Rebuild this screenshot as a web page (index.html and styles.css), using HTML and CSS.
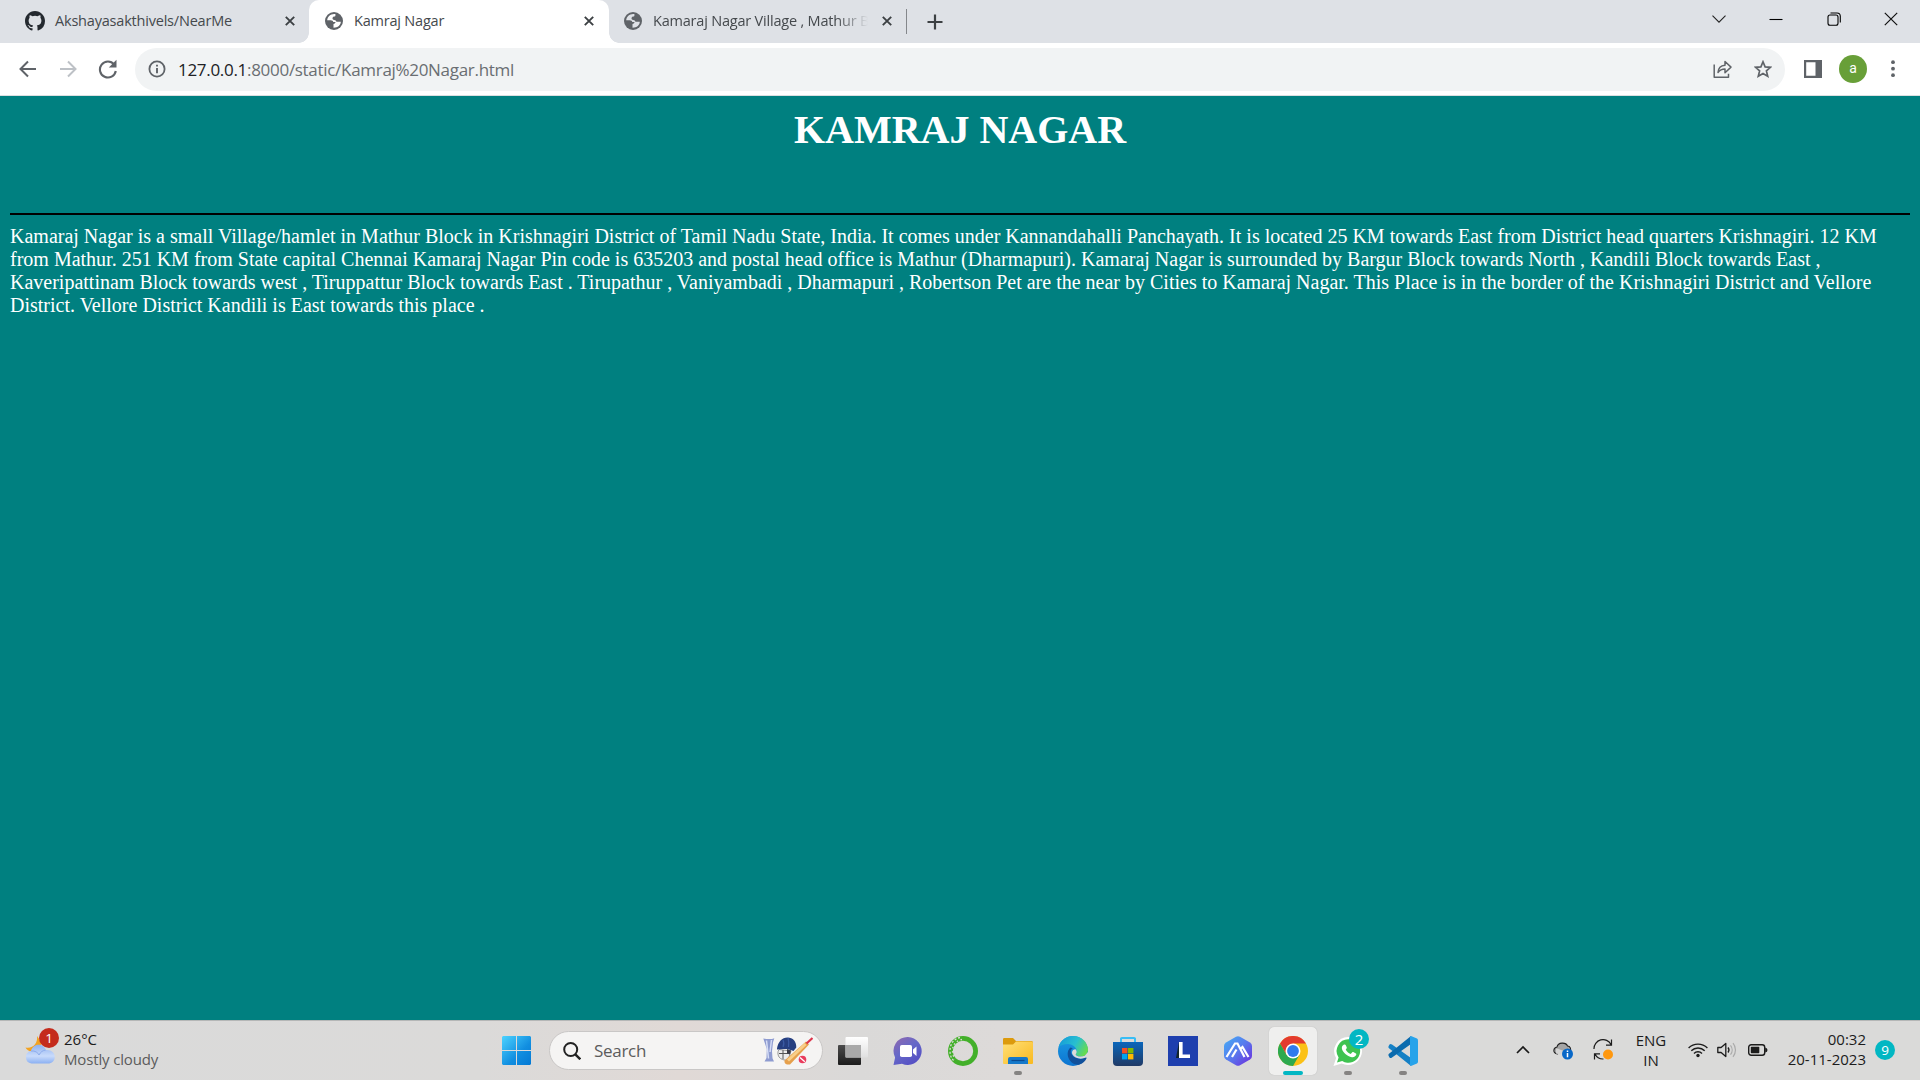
FILE: index.html
```html
<!DOCTYPE html>
<html lang="en">
<head>
<meta charset="utf-8">
<title>Kamraj Nagar</title>
<link rel="stylesheet" href="styles.css">
</head>
<body>
<svg width="0" height="0" class="defs">
  <defs>
    <symbol id="globe" viewBox="0 0 18 18"><circle cx="9" cy="9" r="9" fill="#5f6368"/><path d="M10.500 2.200C6 1.500 2.500 4.500 2.200 8.200h3.500c1.500 0 2.500.8 2.500 1.800h2.300c0 1.200-.8 1.700-2 1.900v3.900C13 15.700 15.800 13 15.800 9.800h-3.300c-1 0-1.500-.7-2-1.600-2.500 0-3-.9-3-1.900 0-1.200 1-1.700 2-1.700.8 0 1-.9 1-2.400z" fill="var(--tab-bg)"/></symbol>
    <symbol id="cross" viewBox="0 0 10 10"><path d="M.8.800l8.400 8.400M9.200.800L.8 9.200" stroke="#3c4043" stroke-width="1.900" fill="none"/></symbol>
  </defs>
</svg>

<header class="tabs">
  <div class="tab tab-first">
    <svg class="fav" viewBox="0 0 16 16"><path fill="#24292f" d="M8 0C3.580 0 0 3.580 0 8c0 3.540 2.290 6.530 5.470 7.590.4.070.55-.17.55-.38v-1.490c-2.230.48-2.700-.94-2.700-.94-.36-.92-.89-1.170-.89-1.170-.73-.5.060-.49.060-.49.800.060 1.230.83 1.230.83.710 1.230 1.870.87 2.330.66.070-.52.280-.87.500-1.070-1.780-.2-3.640-.89-3.640-3.950 0-.87.310-1.590.82-2.150-.08-.2-.36-1.020.08-2.120 0 0 .67-.21 2.200.82a7.600 7.600 0 0 1 4 0c1.530-1.040 2.200-.82 2.200-.82.440 1.100.16 1.920.08 2.120.51.560.82 1.270.82 2.150 0 3.070-1.870 3.750-3.650 3.950.29.250.54.730.54 1.480v2.200c0 .21.150.46.550.38A8 8 0 0 0 16 8c0-4.420-3.580-8-8-8z"/></svg>
    <span class="title">Akshayasakthivels/NearMe</span>
    <svg class="x"><use href="#cross"/></svg>
  </div>
  <div class="tab active">
    <svg class="fav"><use href="#globe"/></svg>
    <span class="title">Kamraj Nagar</span>
    <svg class="x"><use href="#cross"/></svg>
  </div>
  <div class="tab tab-last">
    <svg class="fav"><use href="#globe"/></svg>
    <span class="title t3">Kamaraj Nagar Village , Mathur B</span>
    <svg class="x"><use href="#cross"/></svg>
  </div>
  <i class="sep"></i>
  <svg class="plus" viewBox="0 0 16 16"><path d="M8 .500v15M.5 8h15" stroke="#3c4043" stroke-width="2.200"/></svg>
  <div class="win">
    <svg viewBox="0 0 14 14"><path d="M.5 3.700L7 10.200l6.500-6.500" fill="none" stroke="#222" stroke-width="1.100"/></svg>
    <svg viewBox="0 0 14 14"><path d="M.5 7.500h13" stroke="#000" stroke-width="1.100"/></svg>
    <svg viewBox="0 0 14 14"><rect x="1" y="3" width="10" height="10.300" rx="2" fill="none" stroke="#000" stroke-width="1.100"/><path d="M3.500 1h6.500a3.300 3.300 0 0 1 3.300 3.300V10.500" fill="none" stroke="#000" stroke-width="1.100"/></svg>
    <svg viewBox="0 0 14 14"><path d="M.8.800l12.400 12.400M13.200.800L.8 13.200" stroke="#111" stroke-width="1.200"/></svg>
  </div>
</header>

<nav class="toolbar">
  <svg class="nav-i" viewBox="0 0 20 20"><path d="M18 10H3M10 2.500L2.500 10l7.500 7.500" fill="none" stroke="#5f6368" stroke-width="2"/></svg>
  <svg class="nav-i" viewBox="0 0 20 20"><path d="M2 10h15M10 2.500l7.500 7.500-7.500 7.500" fill="none" stroke="#bdc1c6" stroke-width="2"/></svg>
  <svg class="nav-i" viewBox="0 0 20 20"><path d="M16.200 5.500A8 8 0 1 0 17.800 12" fill="none" stroke="#5f6368" stroke-width="2.100"/><path d="M18.500.800v7.700h-7.700z" fill="#5f6368"/></svg>
  <div class="omnibox">
    <svg class="info" viewBox="0 0 18 18"><circle cx="9" cy="9" r="7.600" fill="none" stroke="#5f6368" stroke-width="1.800"/><path d="M9 8v5.200M9 4.700v1.900" stroke="#5f6368" stroke-width="1.900"/></svg>
    <span class="url"><b>127.0.0.1</b>:8000/static/Kamraj%20Nagar.html</span>
    <svg class="share" viewBox="0 0 20 20"><path d="M1.200 5.500v12.800h14.300v-3.500M5 13.500c.3-4.300 2.500-7 7-7.300V2.500l6 5.600-6 5.600V10c-3.200 0-5.200 1-7 3.500z" fill="none" stroke="#5f6368" stroke-width="1.500" stroke-linejoin="round"/></svg>
    <svg class="star" viewBox="0 0 18 18"><path d="M9 1.800l2.100 5.100 5.400.4-4.100 3.600 1.300 5.300L9 13.400l-4.700 2.800 1.300-5.300L1.500 7.300l5.400-.4z" fill="none" stroke="#5f6368" stroke-width="1.700"/></svg>
  </div>
  <svg class="panel" viewBox="0 0 18 18"><path fill="#5f6368" fill-rule="evenodd" d="M0 0h18v18H0zM2.200 2.200v13.600h9.300V2.200z"/></svg>
  <span class="avatar">a</span>
  <svg class="dots" viewBox="0 0 4 18"><g fill="#5f6368"><circle cx="2" cy="2.200" r="1.900"/><circle cx="2" cy="8.700" r="1.900"/><circle cx="2" cy="15.200" r="1.900"/></g></svg>
</nav>

<main class="page">
  <h1>KAMRAJ NAGAR</h1>
  <hr>
  <p>Kamaraj Nagar is a small Village/hamlet in Mathur Block in Krishnagiri District of Tamil Nadu State, India. It comes under Kannandahalli Panchayath. It is located 25 KM towards East from District head quarters Krishnagiri. 12 KM from Mathur. 251 KM from State capital Chennai Kamaraj Nagar Pin code is 635203 and postal head office is Mathur (Dharmapuri). Kamaraj Nagar is surrounded by Bargur Block towards North , Kandili Block towards East , Kaveripattinam Block towards west , Tiruppattur Block towards East . Tirupathur , Vaniyambadi , Dharmapuri , Robertson Pet are the near by Cities to Kamaraj Nagar. This Place is in the border of the Krishnagiri District and Vellore District. Vellore District Kandili is East towards this place .</p>
</main>

<footer class="taskbar">
  <div class="weather">
    <div class="w-icon">
      <svg viewBox="0 0 30 30">
        <defs><linearGradient id="cl" x1="0" y1="0" x2="0" y2="1"><stop offset="0" stop-color="#8fb1f0"/><stop offset=".6" stop-color="#c9dbfb"/><stop offset="1" stop-color="#8bb0f2"/></linearGradient></defs>
        <path d="M12 1c1 7-4 13-11.500 11.500C2 16 7 18 12 15l5-7z" fill="#f3a220"/>
        <path d="M6.500 28.500a6.300 6.300 0 0 1-.6-12.400C7 12.500 9.800 9.800 13.500 9.800c3.600 0 6.300 2.200 7.200 5.200 5-.8 9.100 2.600 9.100 6.900 0 3.800-3 6.600-6.800 6.600z" fill="url(#cl)"/>
        <path d="M6 16c4-.5 7 1.500 8 4 1.500-3 3.700-4.600 6.700-5" fill="none" stroke="#8dacec" stroke-width="1"/>
      </svg>
      <span class="badge red">1</span>
    </div>
    <div class="w-text"><span class="temp">26°C</span><span class="cond">Mostly cloudy</span></div>
  </div>

  <div class="start">
    <svg viewBox="0 0 29 29"><defs><linearGradient id="ws" gradientUnits="userSpaceOnUse" x1="0" y1="0" x2="29" y2="29"><stop offset="0" stop-color="#4cd3ff"/><stop offset=".6" stop-color="#118ee0"/><stop offset="1" stop-color="#0478d4"/></linearGradient></defs><path fill="url(#ws)" d="M1 0h13v14H0V1zM15 0h13l1 1v13H15zM0 15h14v14H1l-1-1zM15 15h14v13l-1 1H15z"/></svg>
  </div>

  <div class="search">
    <svg class="lens" viewBox="0 0 18 18"><circle cx="7.700" cy="7.500" r="6.500" fill="none" stroke="#222" stroke-width="2"/><path d="M12.300 12.300l5 5" stroke="#222" stroke-width="2.400"/></svg>
    <span>Search</span>
    <svg class="cricket" viewBox="0 0 50 28">
      <path d="M.3 1.500l3 .4H9l2.300-.6-1.300 4-1 9 .5 7 1.500 3.200H1.500L3.500 21 3.800 12z" fill="#8e9bd0"/><path d="M3.500 3.500l2 18M8.500 3l-1.500 12" stroke="#d5dcf5" stroke-width="1.500"/>
      <path d="M16 12.500c-1.500 2-1.500 5 0 7.500 2 2.500 5 3.500 9 3l3-9z" fill="#ececec" stroke="#999" stroke-width="1"/><path d="M16 16.500h9M20 13v9" stroke="#555" stroke-width="1"/><path d="M24 12l4 1.500-1 4-3-1z" fill="#3a3a44"/>
      <path d="M14 11.500C15 5 19 .500 24.500.5c5.500 0 9 4 8.800 10l-2.800 3.500C26 11.500 20 11.500 14 12.500z" fill="#263f80"/><path d="M20 3c1 2 1 5 0 7M25 1c1 3 1 6 .5 9" stroke="#3b5ba3" stroke-width="1.200" fill="none"/>
      <path d="M43 4.500l3 3L27 27.500c-3 .5-6-.5-5.500-4z" fill="#e6a04c"/><path d="M42.500 7L25 23.500" stroke="#f8cf89" stroke-width="3"/><path d="M43.500 6.500l6-5.500" stroke="#dc354c" stroke-width="2.200"/>
      <circle cx="39.500" cy="22.500" r="3.800" fill="#e93b5c"/><path d="M37 20.500l4.800 4.300" stroke="#fff" stroke-width="1.300"/>
    </svg>
  </div>

  <div class="apps">
    <div class="app"><svg viewBox="0 0 30 30"><defs><linearGradient id="dk" x1="0" y1="0" x2="0" y2="1"><stop offset="0" stop-color="#4b4b4b"/><stop offset="1" stop-color="#1c1c1c"/></linearGradient><linearGradient id="lt" x1="0" y1="0" x2="0" y2="1"><stop offset="0" stop-color="#fff"/><stop offset="1" stop-color="#e0e0e0"/></linearGradient></defs><rect y="9" width="23" height="20" rx="1" fill="url(#dk)"/><rect x="7.500" y="1" width="22.500" height="20.500" rx="1" fill="url(#lt)"/><rect x="7.500" y="9" width="15.500" height="12.500" fill="#a9a9a9"/></svg></div>
    <div class="app"><svg viewBox="0 0 30 30"><defs><linearGradient id="tm" x1="0" y1="0" x2=".7" y2="1"><stop offset="0" stop-color="#9269ad"/><stop offset=".5" stop-color="#6668c8"/><stop offset="1" stop-color="#554fc4"/></linearGradient></defs><path d="M15 1a14 14 0 1 1-6 26.800L.5 29l1.600-7.500A14 14 0 0 1 15 1z" fill="url(#tm)"/><rect x="7" y="9" width="12" height="12" rx="1.800" fill="#fff"/><path d="M20 13.500l3.500-3v9.500L20 17z" fill="#fff"/></svg></div>
    <div class="app"><svg viewBox="0 0 30 30"><circle cx="15" cy="15" r="12.600" fill="none" stroke="#43b02a" stroke-width="4.800"/><path d="M12 1.500C5.500 3 2 8 2 15c0 4 1.300 7.500 4 10" fill="none" stroke="#dbd9d8" stroke-width="1.300" stroke-dasharray="2 1.800"/><path d="M14 3.500C7.500 5 4.500 9 4.500 15c0 3 1 6 2.500 8" fill="none" stroke="#dbd9d8" stroke-width="1.300" stroke-dasharray="1.500 2.600"/></svg></div>
    <div class="app run"><svg viewBox="0 0 30 30"><defs><linearGradient id="fo" x1="0" y1="0" x2="1" y2="1"><stop offset="0" stop-color="#ffe078"/><stop offset="1" stop-color="#f9b91f"/></linearGradient></defs><path d="M0 3.200Q0 2 1.200 2H10l3 3h15.500Q30 5 30 6.500V14H0z" fill="#dc9a0c"/><path d="M0 8.500h10l3-3h15.500Q30 5.500 30 7v20q0 1-1 1H1q-1 0-1-1z" fill="url(#fo)"/><path d="M5 28v-5q0-2 2-2h16q2 0 2 2v5z" fill="#1679ca"/><path d="M8.500 24.500h13" stroke="#0b4b91" stroke-width="1.200"/></svg></div>
    <div class="app"><svg viewBox="0 0 30 30"><defs><linearGradient id="eg" x1="0" y1=".2" x2="1" y2=".6"><stop offset="0" stop-color="#159bd9"/><stop offset=".55" stop-color="#28bfd0"/><stop offset="1" stop-color="#67dc4c"/></linearGradient><linearGradient id="eb" x1="0" y1="0" x2="0" y2="1"><stop offset="0" stop-color="#1c9de3"/><stop offset="1" stop-color="#0d74d1"/></linearGradient></defs><circle cx="15" cy="15" r="15" fill="url(#eb)"/><path d="M.6 11C2.500 4 8.400 0 15 0c9 0 15 7 15 13.500 0 4.500-3.300 7-7 7-3 0-5.500-1.200-5.500-2.800 0-1 1-1.200 1-3C18.500 11 14 8 10 8 5.500 8 2 9.500.6 11z" fill="url(#eg)"/><path d="M12.500 11.500C9.500 14 9 18 10.500 22c2 5 7 7.500 11 6.500 3.500-1 6-3.700 7-6.200.3-.8-.3-1.100-1-.7-5 2.400-12.500.7-14.500-4.600-.7-2 .1-4 1.800-4.800z" fill="#11509b"/><path d="M18.200 17.300c-.8.800-.8 2 1 2.700 2.300.9 5.500.8 7.500-.2L30 16v6l-2-.5c-5 2.300-11.500 1-13.500-3-1.200-2.600.2-5.500 3-5.300 1.200 1 1.500 3 .7 4.100z" fill="#dcdad9"/></svg></div>
    <div class="app"><svg viewBox="0 0 30 30"><defs><linearGradient id="st" x1="0" y1="0" x2="0" y2="1"><stop offset="0" stop-color="#0a66bb"/><stop offset="1" stop-color="#213a66"/></linearGradient></defs><path d="M8 8V2.500Q8 2 9 2h12q1 0 1 .5V8" fill="none" stroke="#38bdf5" stroke-width="2"/><path d="M0 6h30v20q0 4-4 4H4q-4 0-4-4z" fill="url(#st)"/><path d="M8 6V3M22 6V3" stroke="#38bdf5" stroke-width="2"/><path fill="#f25022" d="M9 12h5.400v5.400H9z"/><path fill="#7fba00" d="M15 12h5.400v5.400H15z"/><path fill="#00a4ef" d="M9 18h5.400v5.400H9z"/><path fill="#ffb900" d="M15 18h5.400v5.400H15z"/></svg></div>
    <div class="app"><svg viewBox="0 0 30 30"><path fill="#1e3fae" d="M0 0h30v30H0z"/><path d="M11 6L8 22h4z" fill="#11242b"/><path d="M12.800 6v14.300H22" fill="none" stroke="#fff" stroke-width="3.600"/></svg></div>
    <div class="app"><svg viewBox="0 0 30 30"><defs><linearGradient id="hx" x1="0" y1="0" x2="1" y2="1"><stop offset="0" stop-color="#43aef5"/><stop offset=".5" stop-color="#5979ed"/><stop offset="1" stop-color="#6d28dc"/></linearGradient></defs><path d="M13 .8q2-1.100 4 0l10 5.700q2 1.200 2 3.500v10q0 2.300-2 3.500l-10 5.700q-2 1.100-4 0L3 23.500q-2-1.200-2-3.500V10q0-2.300 2-3.500z" fill="url(#hx)"/><path d="M3.500 21L12 7.500h2.500L21.500 21M9 21l4.500-7.500M17 13.500l2.500-2.500L25.500 21" fill="none" stroke="#fff" stroke-width="2.200"/></svg></div>
    <div class="app current"><svg viewBox="0 0 30 30"><circle cx="15" cy="15" r="15" fill="#fbc116"/><path d="M2 7.500A15 15 0 0 1 28 7.500H15L8.500 18.750z" fill="#e33b2e"/><path d="M2 7.500a15 15 0 0 0 13 22.500l6.500-11.250H8.500z" fill="#2da94f"/><circle cx="15" cy="15" r="7.500" fill="#fff"/><circle cx="15" cy="15" r="5.900" fill="#2f7bed"/></svg></div>
    <div class="app run"><svg viewBox="0 0 30 30"><path d="M15.500 1a14 14 0 1 1-6.800 26.500L.5 30l2.600-8A14 14 0 0 1 15.500 1z" fill="#fff"/><path d="M15.500 3.300a11.700 11.700 0 1 1-6.300 21.600L4 26.500 5.600 21.500A11.700 11.700 0 0 1 15.500 3.300z" fill="#3fc351"/><path d="M11 8.500c1-.3 1.500 0 1.800.8l1 2.300c.2.700-.9 1.700-1.100 2 1.100 2.200 2.700 3.500 5 4.400l1.600-1.800c.3-.3.600-.3 1-.1l2.600 1.300c.5.300.5.600.3 1.400-.6 2-2.700 2.700-4.300 2.400-5-1-9-4.700-10-8.500-.4-1.900.8-3.600 2.100-4.200z" fill="#fff"/></svg><span class="badge teal over">2</span></div>
    <div class="app run"><svg viewBox="0 0 30 30"><path d="M1.500 8.500Q2.500 7.500 4 8.500L23 22v8L.7 12Q0 11 .7 10z" fill="#1580c5"/><path d="M1.500 21.500Q2.500 22.500 4 21.500L23 8V0L.7 18Q0 19 .7 20z" fill="#0b6bae"/><path d="M23 0l6 2.500q1 .5 1 2v21q0 1.500-1 2L23 30l-1-1V1z" fill="#27a3ea"/></svg></div>
  </div>

  <div class="tray">
    <svg class="up" viewBox="0 0 14 9"><path d="M1 8l6-6 6 6" fill="none" stroke="#1a1a1a" stroke-width="1.700"/></svg>
    <svg class="cloud" viewBox="0 0 20 20"><path d="M4.500 14C-1 13 .500 7.500 4 7c1-5 9-5 10.500-1 3 0 3.500 3 3 6H7z" fill="#a5a5a5" stroke="#222" stroke-width="1.100"/><path d="M3 8.500c3 0 5.500 2 9 3l-5 3-4-1z" fill="#d4d4d4"/><circle cx="14.500" cy="14" r="5.500" fill="#0868c8"/><path d="M14.500 13v4.200M14.500 10.500v1.400" stroke="#fff" stroke-width="1.500"/></svg>
    <svg class="sync" viewBox="0 0 20 21"><path d="M1 10A9 9 0 0 1 18 5.500M18.500.500v5.700H13M10.500 20A9 9 0 0 1 2 15M1.500 20.500v-5.700h5.500" fill="none" stroke="#1c1c1c" stroke-width="1.200"/><circle cx="15" cy="15.500" r="5" fill="#ff980f"/></svg>
    <div class="lang"><span>ENG</span><span>IN</span></div>
    <svg class="wifi" viewBox="0 0 20 16"><g fill="none" stroke="#1c1c1c" stroke-width="1.400"><path d="M.6 6a13.400 13.400 0 0 1 18.800 0M3.300 8.700a9.500 9.500 0 0 1 13.400 0M6 11.400a5.600 5.600 0 0 1 8 0"/></g><circle cx="10" cy="13.500" r="1.700" fill="#1c1c1c"/></svg>
    <svg class="vol" viewBox="0 0 20 16"><path d="M.8 5.500h3.300L8.800 1.500v13L4.100 10.500H.8z" fill="none" stroke="#1c1c1c" stroke-width="1.300" stroke-linejoin="round"/><path d="M11 5.500a4 4 0 0 1 0 5" fill="none" stroke="#1c1c1c" stroke-width="1.300"/><path d="M13.500 3.300a7.500 7.500 0 0 1 0 9.400M16 1.200a10.600 10.600 0 0 1 0 13.600" fill="none" stroke="#aaa" stroke-width="1.200"/></svg>
    <svg class="bat" viewBox="0 0 20 12"><rect x=".7" y=".7" width="16" height="10.600" rx="2.500" fill="none" stroke="#1c1c1c" stroke-width="1.400"/><rect x="2.800" y="2.700" width="8.500" height="6.600" rx=".7" fill="#1c1c1c"/><path d="M17.200 3.500q2.300.5 2.300 2.500t-2.300 2.500z" fill="#1c1c1c"/></svg>
    <div class="clock"><span>00:32</span><span class="date">20-11-2023</span></div>
    <span class="badge teal">9</span>
  </div>
</footer>
</body>
</html>
```
FILE: styles.css
```css
* { box-sizing: border-box; }
body { margin: 0; width: 1920px; height: 1080px; overflow: hidden; display: flex; flex-direction: column; font-family: "Open Sans", "Noto Sans", sans-serif; }
svg { display: block; flex: none; }
.defs { position: absolute; }

/* Tab strip */
.tabs { height: 43px; flex: none; display: flex; align-items: center; background: #dee1e6; }
.tab { --tab-bg: #dee1e6; height: 43px; display: flex; align-items: center; flex: none; font-size: 14.5px; letter-spacing: -.2px; color: #45494d; white-space: nowrap; }
.tab-first { width: 309px; padding: 0 14px 2px 25px; }
.tab.active { --tab-bg: #fff; width: 300px; padding: 0 15px 2px 16px; background: #fff; border-radius: 10px 10px 0 0; position: relative; }
.tab.active::before, .tab.active::after { content: ""; position: absolute; bottom: 0; width: 10px; height: 10px; }
.tab.active::before { left: -10px; background: radial-gradient(circle at 0 0, transparent 9.5px, #fff 10px); }
.tab.active::after { right: -10px; background: radial-gradient(circle at 100% 0, transparent 9.5px, #fff 10px); }
.tab-last { width: 297px; padding: 0 14px 2px 15px; }
.fav { width: 18px; height: 18px; margin-right: 11px; }
.tab-first .fav { width: 20px; height: 20px; margin-right: 10px; }
.title { flex: 1; }
.t3 { flex: none; width: 229px; -webkit-mask-image: linear-gradient(90deg, #000 184px, transparent 215px); mask-image: linear-gradient(90deg, #000 184px, transparent 215px); }
.x { width: 10px; height: 10px; }
.sep { width: 1px; height: 25px; background: #84878b; }
.plus { width: 16px; height: 16px; margin-left: 20px; }
.win { margin-left: auto; display: flex; gap: 43.5px; padding: 0 22px 6px 0; }
.win svg { width: 14px; height: 14px; }

/* Toolbar */
.toolbar { height: 53px; flex: none; display: flex; align-items: center; background: #fff; border-bottom: 1px solid #dcdfe1; padding: 0 0 0 18px; }
.nav-i { width: 20px; height: 20px; margin-right: 20px; }
.omnibox { width: 1650px; height: 43px; margin-left: -3px; border-radius: 22px; background: #f1f3f4; display: flex; align-items: center; padding: 0 13px; }
.info { width: 18px; height: 18px; margin-right: 12px; }
.url { flex: 1; font-size: 17px; letter-spacing: -.3px; color: #6a6e72; }
.url b { font-weight: 400; color: #202124; }
.share { width: 20px; height: 20px; margin-right: 21px; }
.star { width: 18px; height: 18px; }
.panel { width: 18px; height: 18px; margin-left: 19px; }
.avatar { width: 28px; height: 28px; margin-left: 17px; border-radius: 50%; background: #689f38; color: #fff; font: 14px/27px Roboto, sans-serif; text-align: center; }
.dots { width: 4px; height: 18px; margin-left: 24px; }

/* Page */
.page { flex: 1; background: #008080; color: #fff; padding: 11px 10px 0; font-family: "Liberation Serif", serif; }
h1 { margin: 0; font-size: 40px; line-height: 46px; text-align: center; }
hr { margin: 60px 0 0; height: 2px; border: 0; background: #000; }
p { margin: 10px 0 0; font-size: 20px; line-height: 23px; }

/* Taskbar */
.taskbar { height: 60px; flex: none; display: flex; align-items: center; background: linear-gradient(90deg, #dadada 0, #dbdad9 480px, #e0d9d6 680px, #dad9d8 860px, #dddad9 1000px, #dadad9 1300px, #dadad9); border-top: 1px solid #b5b7b7; color: #1c1c1c; font-size: 15px; }
.badge { width: 20px; height: 20px; border-radius: 50%; color: #fff; font-size: 13.5px; line-height: 20px; text-align: center; flex: none; }
.red { background: #c42b1c; position: absolute; left: 14px; top: -7px; }
.teal { background: #02b7c3; }
.weather { width: 489px; padding: 0 0 2px 25px; display: flex; align-items: center; gap: 9px; }
.w-icon { position: relative; width: 30px; height: 30px; }
.w-text { display: flex; flex-direction: column; line-height: 20px; padding-bottom: 2px; }
.cond { color: #5c5c5c; letter-spacing: -.15px; }
.start { width: 60px; padding-left: 13px; }
.start svg { width: 29px; height: 29px; }
.search { width: 274px; height: 39px; border-radius: 20px; background: #f5f4f3; border: 1px solid #c9c7c6; display: flex; align-items: center; padding: 0 9px 0 13px; color: #5c5c5c; font-size: 17px; letter-spacing: -.3px; }
.search span { margin-left: 13px; flex: 1; }
.lens { width: 18px; height: 18px; }
.cricket { width: 50px; height: 28px; }
.apps { display: flex; margin-left: 6px; gap: 7px; }
.app { width: 48px; height: 48px; padding: 9px; border-radius: 5px; position: relative; }
.app svg { width: 30px; height: 30px; }
.current { background: #efefee; box-shadow: 0 0 1px #aaa; }
.run::after, .current::after { content: ""; position: absolute; bottom: 0; left: 20px; width: 8px; height: 4px; border-radius: 2px; background: #858382; }
.current::after { left: 14px; width: 20px; background: #02b7c3; }
.over { position: absolute; left: 25px; top: 2px; font-size: 15px; }
.tray { display: flex; align-items: center; margin-left: auto; padding: 0 25px 2px 0; }
.up { width: 14px; height: 9px; }
.cloud { width: 20px; height: 20px; margin-left: 23px; }
.sync { width: 20px; height: 21px; margin-left: 20px; }
.lang { width: 56px; margin-left: 10px; display: flex; flex-direction: column; line-height: 20px; text-align: center; }
.wifi { width: 20px; height: 16px; margin-left: 9px; }
.vol { width: 20px; height: 16px; margin-left: 9px; }
.bat { width: 20px; height: 12px; margin-left: 11px; }
.clock { width: 98px; display: flex; flex-direction: column; line-height: 20px; padding-bottom: 2px; text-align: right; white-space: nowrap; margin-right: 9px; }
```
